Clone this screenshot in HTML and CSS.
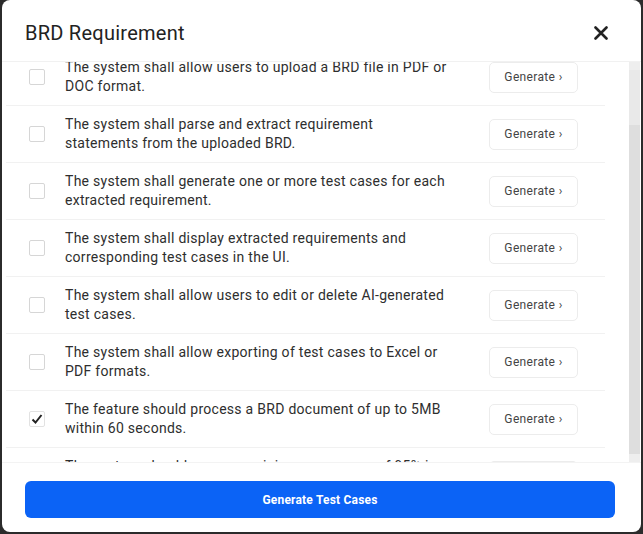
FILE: index.html
```html
<!DOCTYPE html>
<html>
<head>
<meta charset="utf-8">
<link rel="stylesheet" href="styles.css">
</head>
<body>
<div class="modal">
  <div class="header">
    <h1 class="title">BRD Requirement</h1>
    <button class="close" aria-label="Close">
      <svg width="14" height="14" viewBox="0 0 14 14"><path d="M1.5 1.5 L12.5 12.5 M12.5 1.5 L1.5 12.5" stroke="#222" stroke-width="2.6" stroke-linecap="round"/></svg>
    </button>
  </div>
  <div class="body">
    <div class="list" id="list">
      <div class="row"><span class="box"></span><p class="text">The system shall allow users to upload a BRD file in PDF or DOC format.</p><button class="gen">Generate ›</button></div>
      <div class="row"><span class="box"></span><p class="text">The system shall parse and extract requirement statements from the uploaded BRD.</p><button class="gen">Generate ›</button></div>
      <div class="row"><span class="box"></span><p class="text">The system shall generate one or more test cases for each extracted requirement.</p><button class="gen">Generate ›</button></div>
      <div class="row"><span class="box"></span><p class="text">The system shall display extracted requirements and corresponding test cases in the UI.</p><button class="gen">Generate ›</button></div>
      <div class="row"><span class="box"></span><p class="text">The system shall allow users to edit or delete AI-generated test cases.</p><button class="gen">Generate ›</button></div>
      <div class="row"><span class="box"></span><p class="text">The system shall allow exporting of test cases to Excel or PDF formats.</p><button class="gen">Generate ›</button></div>
      <div class="row"><span class="box checked"><svg width="14" height="14" viewBox="0 0 14 14"><path d="M2.5 7.5 L5.5 10.5 L11.5 3" fill="none" stroke="#222" stroke-width="2"/></svg></span><p class="text">The feature should process a BRD document of up to 5MB within 60 seconds.</p><button class="gen">Generate ›</button></div>
      <div class="row"><span class="box"></span><p class="text">The system should ensure a minimum accuracy of 95% in requirement extraction.</p><button class="gen">Generate ›</button></div>
      <div class="row"><span class="box"></span><p class="text">The system shall maintain an audit log of all generated test cases.</p><button class="gen">Generate ›</button></div>
      <div class="row"><span class="box"></span><p class="text">The system shall support concurrent processing of multiple BRD files.</p><button class="gen">Generate ›</button></div>
    </div>
    <div class="scrollbar">
      <div class="sb-btn"></div>
      <div class="sb-upper"></div>
      <div class="sb-thumb"></div>
      <div class="sb-btn"></div>
    </div>
  </div>
  <div class="footer">
    <button class="primary">Generate Test Cases</button>
  </div>
</div>
<script src="script.js"></script>
</body>
</html>
```
FILE: styles.css
```css
html, body {
  margin: 0;
  padding: 0;
  background: #2b2b2b;
  font-family: Roboto, "Liberation Sans", sans-serif;
}
body {
  padding: 0 2px 2px 2px;
  height: 534px;
  box-sizing: border-box;
  overflow: hidden;
}
.modal {
  width: 639px;
  height: 532px;
  background: #fff;
  border-radius: 8px;
  display: flex;
  flex-direction: column;
  overflow: hidden;
}
.header {
  height: 62px;
  box-sizing: border-box;
  padding: 4px 33px 0 23px;
  display: flex;
  align-items: center;
  justify-content: space-between;
  border-bottom: 1px solid #f1f1f1;
  flex: none;
}
.title {
  margin: 0;
  font-size: 20px;
  font-weight: 400;
  color: #222;
  letter-spacing: 0.25px;
}
.close {
  border: 0;
  background: none;
  padding: 0;
  width: 14px;
  height: 14px;
  display: flex;
}
.body {
  flex: 1;
  min-height: 0;
  display: flex;
  padding-right: 1px;
}
.list {
  flex: 1;
  overflow: hidden;
  padding: 0 24px 0 4px;
}
.scrollbar {
  width: 11px;
  flex: none;
  display: flex;
  flex-direction: column;
  background: #e2e2e2;
}
.sb-btn {
  height: 8px;
  background: #eeeeee;
  flex: none;
}
.sb-upper {
  height: 55px;
  background: #e9e9e9;
  flex: none;
}
.sb-thumb {
  flex: 1;
  background: #dedede;
}
.row {
  height: 57px;
  box-sizing: border-box;
  display: flex;
  align-items: center;
  border-bottom: 1px solid #f1f1f1;
  padding: 0 27px 0 23px;
}
.box {
  width: 16px;
  height: 16px;
  box-sizing: border-box;
  border: 1px solid #d6d6d6;
  border-radius: 2px;
  flex: none;
  display: flex;
  align-items: center;
  justify-content: center;
}
.box.checked { border-color: #e2e2e2; }
.text {
  margin: 0 0 0 20px;
  width: 384px;
  flex: none;
  font-size: 14px;
  line-height: 19px;
  letter-spacing: 0.28px;
  color: #2e2e2e;
}
.gen {
  margin-left: auto;
  width: 89px;
  height: 31px;
  border: 1px solid #ececec;
  border-radius: 5px;
  background: #fff;
  font-family: Roboto, "Liberation Sans", sans-serif;
  font-size: 12px;
  letter-spacing: 0.35px;
  color: #444;
  padding: 0;
}
.footer {
  flex: none;
  height: 70px;
  box-sizing: border-box;
  padding: 18px 26px 15px 23px;
  border-top: 1px solid #f3f3f3;
}
.primary {
  width: 100%;
  height: 37px;
  border: 0;
  border-radius: 6px;
  background: #0b63f6;
  color: #fff;
  font-family: Roboto, "Liberation Sans", sans-serif;
  font-size: 12px;
  font-weight: 700;
  letter-spacing: 0.2px;
}
```
FILE: script.js
```js
document.getElementById('list').scrollTop = 13;
```
